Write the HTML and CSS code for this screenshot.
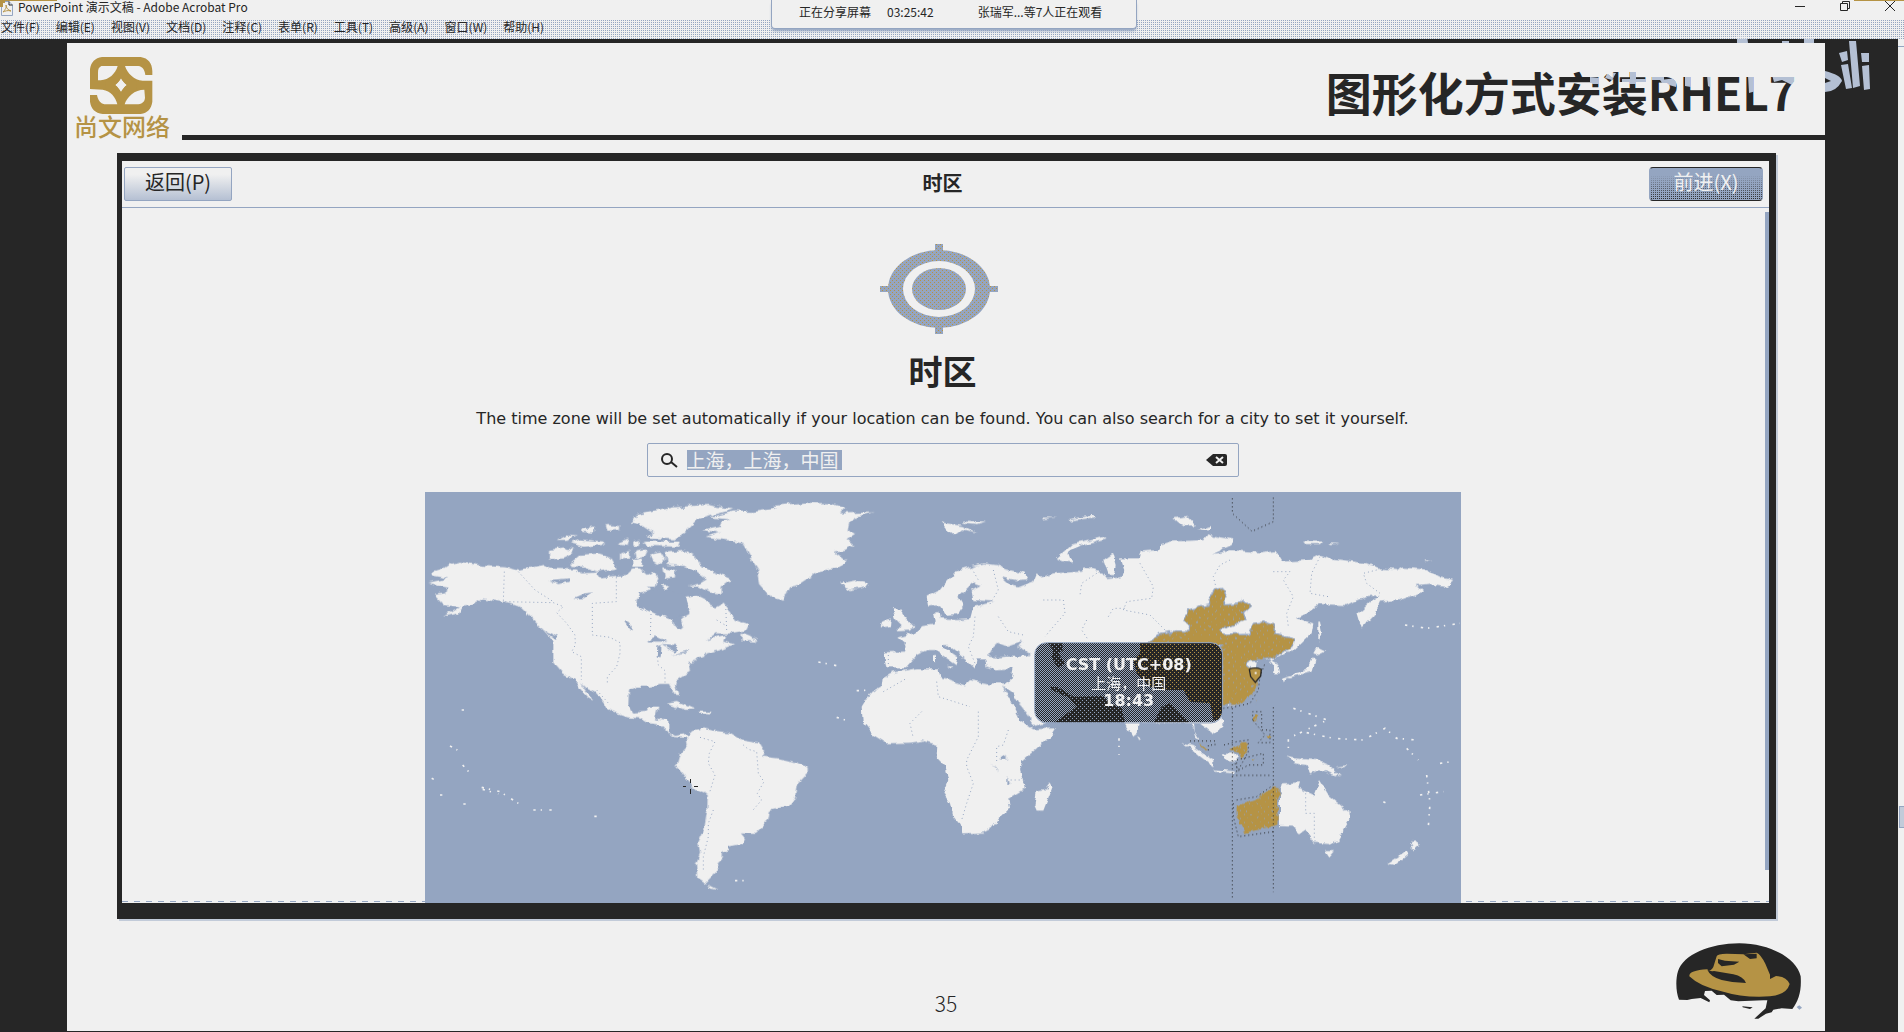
FILE: index.html
```html
<!DOCTYPE html>
<html lang="zh-CN">
<head>
<meta charset="utf-8">
<title>PowerPoint 演示文稿 - Adobe Acrobat Pro</title>
<link rel="stylesheet" href="styles.css">
</head>
<body>
<header class="titlebar">
  <svg class="app-icon" viewBox="0 0 14 16" aria-hidden="true"><path d="M1.500 1.500H9L12.500 5V15.500H1.500Z" fill="#f0f0f0" stroke="#94a5c1"/><path d="M9 1.500V5H12.500" fill="none" stroke="#262626"/><path d="M0 0H5V3H3V7H0Z" fill="#b59345"/><path d="M3 12C5 10 7 7 6 5C6 8 8 10 11 11C8 10 5 11 3 12Z" fill="none" stroke="#b59345"/></svg>
  <h1 class="app-title">PowerPoint 演示文稿 - Adobe Acrobat Pro</h1>
  <div class="window-buttons">
    <button aria-label="最小化"><svg viewBox="0 0 12 12"><path d="M1 6.500H11"/></svg></button>
    <button aria-label="还原"><svg viewBox="0 0 12 12"><path d="M1.500 3.500H8.500V10.500H1.500ZM3.500 3.500V1.500H10.500V8.500H8.500"/></svg></button>
    <button aria-label="关闭"><svg viewBox="0 0 12 12"><path d="M1 1L11 11M11 1L1 11"/></svg></button>
  </div>
</header>
<nav class="menubar">
  <button>文件(F)</button><button>编辑(E)</button><button>视图(V)</button><button>文档(D)</button><button>注释(C)</button><button>表单(R)</button><button>工具(T)</button><button>高级(A)</button><button>窗口(W)</button><button>帮助(H)</button>
</nav>
<div class="share-banner"><span>正在分享屏幕</span><span>03:25:42</span><span class="viewers">张瑞军...等7人正在观看</span></div>

<div class="viewer">
<main class="slide">
  <header class="slide-head">
    <div class="brand">
      <svg viewBox="0 0 189 171" aria-hidden="true">
        <path fill="#b59345" fill-rule="evenodd" d="M36 0H152C175 4 186 18 187 42V54H166C164 38 158 29 145 27H105C112 48 132 70 158 71H187V134C184 155 173 168 152 171H38C15 168 3 155 0 134V114H21C24 130 31 139 43 142H82C77 121 62 101 38 98L0 96V36C3 15 15 3 36 0ZM34 27C26 31 24 37 24 48V70H32C57 68 76 51 83 27ZM93 63C89 71 83 78 75 84C83 90 89 98 93 106C97 98 103 90 111 84C103 78 97 71 93 63ZM163 98C134 98 111 119 104 142H145C159 139 164 133 165 122Z"/>
        <path fill="#b59345" fill-rule="evenodd" d="M93 25C99 48 114 68 139 72L141 98C116 103 100 120 93 144C86 122 72 104 46 98V71C73 63 87 46 93 25ZM93 63C89 71 83 78 75 84C83 90 89 98 93 106C97 98 103 90 111 84C103 78 97 71 93 63Z"/>
      </svg>
      <span>尚文网络</span>
    </div>
    <h2 class="slide-title">图形化方式安装RHEL7</h2>
  </header>

  <section class="shot">
    <header class="shot-head">
      <button class="btn back">返回(P)</button>
      <h3>时区</h3>
      <button class="btn next">前进(X)</button>
    </header>
    <div class="shot-body">
      <svg class="target" viewBox="0 0 118 90" aria-hidden="true">
        <defs><pattern id="speck" width="4" height="4" patternUnits="userSpaceOnUse"><rect width="4" height="4" fill="#94a5c1"/><rect width="1" height="1" fill="#b59345"/><rect x="2" y="2" width="1" height="1" fill="#b59345"/></pattern></defs>
        <path fill="url(#speck)" fill-rule="evenodd" d="M55 0H63V90H55ZM0 42H118V48H0Z"/>
        <ellipse cx="59" cy="45" rx="51" ry="39" fill="url(#speck)"/>
        <ellipse cx="59" cy="45" rx="36" ry="28" fill="#f0f0f0"/>
        <ellipse cx="59" cy="45" rx="27" ry="21" fill="url(#speck)"/>
      </svg>
      <h3 class="zone-title">时区</h3>
      <p class="zone-hint">The time zone will be set automatically if your location can be found. You can also search for a city to set it yourself.</p>
      <label class="search">
        <svg class="lens" viewBox="0 0 18 16" aria-hidden="true"><ellipse cx="7" cy="7" rx="5" ry="5" fill="none" stroke="#262626" stroke-width="2"/><path d="M11 10L17 15" stroke="#262626" stroke-width="2"/></svg>
        <input type="text" value="上海，上海，中国" aria-label="城市">
        <button class="clear" aria-label="清除"><svg viewBox="0 0 22 14"><path d="M0 7L7 1H19Q21 1 21 3V11Q21 13 19 13H7Z" fill="#262626"/><path d="M10 4L17 10M17 4L10 10" stroke="#f0f0f0" stroke-width="2"/></svg></button>
      </label>
      <div class="map">
        <svg viewBox="15 6 3108 1233" role="img" aria-label="世界时区地图">
          <defs>
            <filter id="coast" x="0" y="0" width="100%" height="100%"><feTurbulence type="fractalNoise" baseFrequency="0.04" numOctaves="3" seed="4"/><feDisplacementMap in="SourceGraphic" scale="18" xChannelSelector="R" yChannelSelector="G"/></filter>
            <pattern id="check" width="6" height="6" patternUnits="userSpaceOnUse"><rect width="6" height="6" fill="#262626"/><path d="M0 0H3V3H0ZM3 3H6V6H3Z" fill="#94a5c1"/></pattern>
            <pattern id="goldDots" width="24" height="24" patternUnits="userSpaceOnUse"><rect width="24" height="24" fill="#b59345"/><path d="M0 0H3V3H0ZM12 12H15V15H12Z" fill="#94a5c1"/></pattern>
            <pattern id="nightGold" width="12" height="12" patternUnits="userSpaceOnUse"><rect width="12" height="12" fill="#262626"/><path d="M0 0H3V3H0ZM6 6H9V9H6Z" fill="#b59345"/></pattern>
            <pattern id="nightSea" width="12" height="12" patternUnits="userSpaceOnUse"><rect width="12" height="12" fill="#262626"/><path d="M0 0H3V3H0ZM6 6H9V9H6Z" fill="#94a5c1"/></pattern>
            <clipPath id="bubble"><rect x="1845" y="459" width="561" height="238" rx="34"/></clipPath>
          </defs>
          <rect x="15" y="6" width="3108" height="1233" fill="#94a5c1"/>
          <g filter="url(#coast)" fill="#f0f0f0">
            <!-- the Americas and Greenland -->
            <path d="M38 245L70 235 90 222 120 215 190 228 260 232 300 242 370 228 390 236 470 238 480 250 530 248 540 262 620 255 640 235 660 235 680 255 700 245 712 260 705 290 680 290 690 300 650 328 650 345 690 362 725 378 755 385 758 405 780 418 792 405 785 385 808 372 808 358 795 350 800 320 830 315 860 330 870 348 890 352 910 340 925 360 945 390 985 402 975 422 930 430 890 430 860 452 890 440 915 435 910 455 945 462 900 480 860 490 855 500 830 505 815 525 805 520 810 545 768 572 765 585 776 615 765 615 750 585 720 585 690 590 650 590 627 600 625 645 640 668 680 665 690 650 715 650 705 685 745 690 745 725 765 738 800 732 800 744 760 741 730 715 720 705 680 698 660 685 620 682 580 668 560 655 555 640 525 605 495 590 480 575 495 600 520 632 505 625 480 595 465 570 430 550 400 515 400 455 370 420 340 390 300 350 240 335 190 325 165 340 130 350 115 370 70 380 120 350 70 345 42 315 75 310 80 290 25 278 85 265 40 258Z"/>
            <path d="M390 180L430 172 460 180 450 195 430 205 390 208ZM450 220L480 195 540 190 570 200 590 235 530 245 490 230 455 228ZM410 150L440 133 470 136 440 150ZM450 160L480 148 555 155 545 165 490 170ZM560 105L600 108 600 120 565 122ZM590 160L625 145 620 165ZM600 190L630 180 630 205 600 208ZM640 210L665 205 670 230 640 230ZM640 155L660 150 660 168 640 168ZM670 155L780 155 775 170 690 168ZM635 98L650 75 700 65 760 52 860 45 940 58 880 75 830 90 790 130 760 148 680 142 700 125 670 105ZM645 185L680 178 670 200 650 205ZM690 190L720 185 735 210 715 225 700 215ZM735 185L790 180 820 195 840 225 880 245 935 268 905 290 905 310 870 308 835 290 800 290 840 280 860 268 830 245 790 228 740 225ZM730 235L765 240 765 262 735 265ZM720 285L750 285 740 300ZM965 430L990 440 1010 455 965 452ZM740 642L770 636 825 658 800 660ZM835 662L875 662 870 670 840 668ZM485 118L525 112 520 128 490 126Z"/>
            <path d="M800 740L820 720 850 715 880 722 930 728 970 752 1020 760 1035 785 1030 800 1075 805 1130 818 1163 832 1163 850 1130 885 1125 925 1110 945 1050 962 1045 990 1005 1032 960 1030 975 1048 965 1062 925 1070 925 1080 905 1085 905 1105 890 1120 895 1140 880 1155 865 1170 855 1180 832 1165 828 1120 840 1090 835 1060 852 1020 862 960 863 915 825 900 808 875 790 850 770 828 780 790 803 765ZM862 1183L893 1200 870 1196Z"/>
            <path d="M845 120L900 108 905 95 930 88 870 82 940 64 1000 66 1070 55 1060 48 1150 38 1230 40 1275 54 1260 70 1358 67 1310 80 1285 95 1280 120 1305 135 1280 150 1300 165 1275 180 1240 185 1280 215 1250 235 1190 248 1140 280 1110 290 1090 333 1050 320 1020 285 1015 240 990 200 965 155 900 148 860 140 900 128Z"/>
            <!-- Europe, Africa and Asia -->
            <g transform="translate(1200 0)">
              <path d="M320 320L360 300 380 275 410 240 450 230 490 220 530 225 560 238 610 250 620 268 590 270 545 262 570 285 595 292 640 275 650 250 665 262 700 250 790 245 790 232 840 242 860 267 905 262 910 235 900 205 960 205 965 185 1015 180 1022 163 1050 155 1150 150 1165 130 1190 140 1240 148 1235 165 1175 192 1230 183 1320 190 1370 183 1390 215 1470 210 1500 195 1530 205 1640 220 1680 235 1730 240 1750 230 1810 235 1860 262 1900 270 1880 288 1835 280 1790 285 1810 305 1740 330 1680 335 1665 370 1625 415 1612 370 1650 335 1680 315 1640 318 1600 335 1580 345 1500 342 1460 370 1430 385 1480 400 1475 430 1420 485 1400 485 1350 515 1365 535 1362 550 1380 550 1375 525 1345 505 1315 505 1300 600 1240 645 1200 650 1208 705 1180 732 1140 700 1122 700 1124 725 1140 752 1130 745 1116 700 960 698 952 725 935 738 910 698 850 640 720 690 638 708 600 655 580 612 550 590 570 575 578 535 530 538 500 530 495 505 470 505 465 535 440 512 385 465 372 465 372 475 415 505 410 525 345 480 320 480 290 495 255 535 200 535 190 487 255 485 260 465 235 443 280 430 310 405 345 400 340 370 355 365 360 388 410 390 450 388 460 350 525 335 460 330 455 300 485 285 460 277 415 320 430 345 410 372 380 375 360 345 325 350Z"/>
              <path d="M188 565L220 548 290 535 355 535 360 560 435 585 450 570 500 580 550 580 555 600 580 650 600 690 640 718 705 715 690 740 610 810 600 840 615 895 565 925 570 955 545 975 515 1015 490 1028 430 1030 425 1010 400 980 390 940 370 910 385 870 375 825 350 800 352 765 310 752 270 758 200 760 160 735 128 695 125 650 150 610 185 590ZM692 878L698 890 670 962 650 962 643 945 650 905 675 900Z"/>
              <path d="M60 280L110 270 145 278 135 292 90 300 70 290ZM215 355L238 355 250 375 280 408 270 422 230 424 245 405 225 385ZM190 395L212 385 210 408 185 412ZM365 98L430 108 470 128 430 118 405 138 380 118ZM430 92L498 95 470 102 430 98ZM710 208L760 160 850 138 860 145 780 165 745 190 755 217 730 215ZM850 210L880 190 890 225 885 255 865 255ZM380 528L400 530 395 536ZM342 495L348 495 348 515 342 515ZM660 83L710 83 665 88ZM745 88L820 76 825 82 750 92Z"/>
            </g>
            <!-- the Pacific side -->
            <g transform="translate(2100 0)">
              <path d="M160 85L200 78 225 105 190 108ZM230 118L270 108 270 118ZM550 155L610 155 600 165 555 165ZM625 160L660 162 630 165ZM595 395L600 395 606 430 595 455ZM580 490L590 472 616 485 595 495ZM575 505L586 515 578 545 510 562 495 560 560 540ZM490 562L500 560 495 575ZM190 758L215 765 280 810 280 832 240 802ZM280 838L345 845 340 850 285 845ZM55 735L68 745 60 750ZM308 790L345 785 358 800 345 815 320 808ZM500 800L520 805 590 810 625 825 660 860 600 838 570 850 560 825 520 820ZM645 830L682 826 675 832Z"/>
              <path d="M480 895L490 880 540 877 535 895 580 915 597 870 625 915 685 965 688 990 655 1050 625 1062 580 1058 555 1020 540 1030 515 1010 480 1008ZM615 1083L645 1083 628 1103ZM878 1050L900 1062 880 1080 870 1070ZM805 1120L860 1085 865 1092 825 1125ZM910 212L938 212 915 216Z"/>
            </g>
          </g>
          <!-- inland water -->
          <g filter="url(#coast)" fill="#94a5c1">
            <path d="M385 270L450 265 450 275 415 282ZM460 325L495 310 520 308 490 325ZM612 395L625 395 637 422 625 412ZM675 455L710 440 740 455ZM712 470L725 465 722 498 710 498ZM725 462L775 465 765 485ZM750 495L810 480 800 488ZM650 345L660 308 720 298 795 312 805 345 800 372 760 382 710 372ZM372 420L412 438 408 450 385 432Z"/>
            <g transform="translate(1200 0)"><path d="M505 500L512 480 535 458 560 468 605 452 592 470 628 490 625 500 560 500 530 502ZM540 800L560 792 560 808 540 808ZM515 820L535 850 525 840ZM562 855L570 885 562 885ZM545 588L565 605 605 650 635 690 630 700 605 690 580 640Z"/></g>
          </g>
          <!-- the UTC+08 zone -->
          <g transform="translate(2100 0)">
            <g filter="url(#coast)" fill="url(#goldDots)" stroke="#94a5c1" stroke-width="4">
              <path d="M75 465L105 445 120 430 170 422 210 425 212 410 192 390 205 360 265 345 270 320 285 295 305 293 318 320 312 345 350 342 365 330 392 350 370 370 378 388 350 400 300 420 310 433 390 430 400 400 430 396 460 405 465 430 525 445 520 465 490 490 440 508 390 510 380 525 412 550 412 590 390 625 350 645 305 648 305 465Z"/>
              <path d="M348 942L410 925 460 890 478 893 474 1006 420 1020 370 1032 365 1010 348 975ZM400 670L414 672 410 700 400 695ZM435 735L455 738 445 750ZM325 782L380 752 385 780 365 812 355 790ZM230 752L260 775 252 782ZM390 805L412 805 400 815ZM404 625L412 630 408 640Z"/>
            </g>
            <path class="zone-edge" d="M337 25V70L396 124 460 95V22M337 655V1225M460 652V1205M337 856H450M310 655L345 650 390 640 415 600 420 560 435 520M398 690V665H425V720H450V758H415L435 735ZM312 765L350 755 385 750V785L355 840 345 820M210 753H285V765H265V790M350 845V810L430 790V825H385ZM340 940V980L355 1040 460 1025M350 930L410 920 460 885"/>
            <path d="M388 538Q404 530 424 538L422 558 406 577 392 560Z" fill="#b59345" stroke="#262626" stroke-width="4"/><path d="M404 546H410V552H404Z" fill="#f0f0f0"/>
          </g>
          <g class="borders">
            <path d="M253 245L250 335 400 338 430 350 410 368 440 400 465 435 466 465 455 485 484 500V570M295 245L345 300 400 335M589 250V335L517 340V435L570 442 600 458V490L590 530 562 560V585M693 372L691 440M712 500L715 525 735 542V582M530 600L570 645M917 345L920 420M890 390L915 405M840 742L885 755 868 790 865 820 885 855 868 910M970 765L985 778 1010 785 1015 850 1032 875 1012 910 1025 930 995 965M880 960L865 1000V1040L850 1100V1140"/>
            <path d="M1405 495V535M1665 380L1660 440 1645 470 1665 520M1390 605L1460 565M1550 575L1555 620 1650 650M1505 665L1470 700 1480 745M1675 665V740L1640 810V830L1660 880 1640 940 1625 990M1765 720L1750 765 1730 770V820M1655 235L1675 270M1720 240L1735 300 1705 350M1735 380L1765 425 1810 435M2030 250L1985 280 1980 315M1870 330H1930L1935 370 1900 410 1875 440M2000 390L1985 420 2005 450M2065 380L2080 355H2115M1760 870H1805"/>
            <path d="M2160 220L2200 290 2195 325 2120 335 2110 360 2190 375 2240 425M2430 210L2400 225 2380 260 2390 300M2560 245H2610L2590 270 2620 320 2600 370 2605 410M2700 200L2675 250 2670 310 2725 320M2870 240L2830 250 2840 280 2880 310M2657 910V970H2683V1050"/>
          </g>
          <!-- small islands -->
          <path class="islets" d="M185 892L240 905 295 940M188 898L235 912M125 660H132M90 768L112 780M35 865L45 870M128 825L155 855M60 915H68M130 942H138M340 960L395 960M523 979H530M1195 516L1255 528M945 1172H972M1310 602L1350 600M1250 682L1275 690M2097 745V795M2620 655L2722 690 2605 745V775M2660 728L2740 745 2830 750 2895 715 2930 745 2990 750M2960 775L2995 810M3060 820L3095 815M3020 855L3030 940 3025 1010M3000 915L3070 905M2890 935L2905 942M2955 405L3020 415 3120 400"/>
          <path d="M811 867V880M811 898V912M789 889H799M822 889H834" stroke="#262626" stroke-width="3" shape-rendering="crispEdges"/>
          <!-- zone bubble -->
          <g clip-path="url(#bubble)">
            <rect x="1840" y="455" width="570" height="246" fill="url(#check)"/>
            <path d="M1880 455H1925L1930 480 1915 490 1935 520 1915 535 1895 505 1900 480ZM1890 590L1915 592 1960 620 2050 618 2070 640 2105 655 2115 700H1900L1970 650 1950 625 1895 600ZM2200 700L2225 650 2250 640 2290 680 2310 700Z" fill="url(#nightSea)"/>
            <path d="M2160 455H2420V690H2380L2370 640 2310 635 2290 600 2240 600 2190 590 2150 550 2140 510 2160 490Z" fill="url(#nightGold)"/>
          </g>
          <rect x="1844" y="458" width="564" height="241" rx="35" fill="none" stroke="#94a5c1" stroke-width="3"/>
        </svg>
        <div class="tip"><strong>CST (UTC+08)</strong><span>上海，中国</span><strong>18:43</strong></div>
      </div>
      <div class="shot-scroll"></div>
    </div>
  </section>

  <footer class="slide-foot">
    <span class="page-no">35</span>
    <svg class="hat" viewBox="228 190 378 231" aria-hidden="true">
      <path fill="#262626" d="M237 360C228 340 226 300 234 275C250 225 330 191 418 191C510 192 590 235 602 290C605 335 596 362 577 388L545 386 520 390 515 398 498 402 475 417 463 417 497 386 502 362 490 362 415 365 392 362 372 345 350 346 335 333 315 334 312 346 330 362 328 368 302 355 275 358 262 361Z"/>
      <path fill="#b59345" d="M268 290Q266 272 322 269Q328 280 340 262L350 230Q352 222 380 222L430 224 470 219Q482 224 496 252L510 285V298L528 289Q560 290 569 313Q560 345 510 350Q430 355 370 336Q300 322 268 290Z"/>
      <path fill="#262626" d="M322 270Q335 276 342 274L400 284Q430 290 438 310Q400 310 365 301Q330 290 322 270ZM354 238L375 243 418 246 402 255 365 260 354 250ZM430 224L470 222 470 236 450 238ZM427 380L442 381 458 383 450 388 428 383Z"/>
      <path fill="#94a5c1" d="M590 382L598 377 606 384 598 390Z"/>
    </svg>
  </footer>
</main>
<aside class="side-scroll"><div class="side-thumb"></div></aside>
</div>
<svg class="watermark" viewBox="1590 35 290 60" aria-hidden="true">
  <g fill="#b4c0d4">
    <path d="M1737 35L1747 35 1748 43H1737ZM1782 41H1789V43H1782ZM1804 38H1814V43H1804Z"/>
    <path d="M1608 72L1616 73 1612 80 1605 78ZM1622 79H1646V84H1622ZM1630 72H1636V84H1630ZM1590 77L1600 78V84H1590ZM1652 76H1664V80H1652ZM1660 80L1677 78 1676 87 1662 83ZM1685 75H1691V87L1685 86ZM1707 75L1714 78 1712 88 1708 86ZM1748 75H1757L1756 91 1749 93ZM1772 75L1796 76 1794 86 1782 80 1774 82Z"/>
    <path fill-rule="evenodd" d="M1825 71Q1841 75 1842 81Q1836 92 1825 92ZM1825 78L1831 81 1825 83Z"/>
    <path d="M1839 53L1847 51 1848 60 1842 62ZM1841 65L1848 64 1852 88 1846 89ZM1849 41H1856L1860 86 1853 88ZM1861 53H1869V62H1862ZM1862 66L1869 65 1870 89 1864 90Z"/>
  </g>
</svg>
</body>
</html>
```
FILE: styles.css
```css
:root {
  --paper: #f0f0f0;
  --ink: #262626;
  --blue: #94a5c1;
  --gold: #b59345;
}

* { box-sizing: border-box; }

body {
  margin: 0;
  min-height: 100vh;
  display: flex;
  flex-direction: column;
  position: relative;
  overflow-x: hidden;
  background: var(--ink);
  color: var(--ink);
  font-family: "Noto Sans CJK SC", sans-serif;
  font-size: 12px;
}

h1, h2, h3, p { margin: 0; }

button {
  margin: 0;
  padding: 0;
  border: 0;
  background: none;
  color: inherit;
  font: inherit;
}

svg { display: block; }

.titlebar {
  height: 20px;
  display: flex;
  align-items: flex-start;
  background:
    linear-gradient(var(--gold), var(--gold)) 0 0 / 57px 1px no-repeat,
    linear-gradient(var(--gold), var(--gold)) 100% 0 / 50px 1px no-repeat,
    var(--paper);
}

.app-icon { width: 14px; height: 16px; }

.app-title {
  flex: 1;
  margin-left: 4px;
  font-size: 12px;
  font-weight: 400;
  line-height: 14px;
}

.window-buttons {
  display: flex;
  gap: 33px;
  padding-right: 8px;
}

.window-buttons svg {
  width: 12px;
  height: 12px;
  fill: none;
  stroke: var(--ink);
}

.menubar {
  height: 19px;
  display: flex;
  align-items: flex-start;
  gap: 16px;
  padding-left: 1px;
  line-height: 14px;
  background:
    conic-gradient(var(--blue) 25%, transparent 0) 0 0 / 2px 2px,
    var(--paper);
}

.share-banner {
  position: absolute;
  top: 0;
  left: 50%;
  width: 366px;
  height: 29px;
  margin-left: -181px;
  padding-left: 27px;
  display: flex;
  gap: 16px;
  line-height: 24px;
  background: var(--paper);
  border: 1px solid var(--blue);
  border-top: 0;
  border-radius: 0 0 4px 4px;
  box-shadow: 0 3px 3px -1px var(--blue);
  white-space: nowrap;
}

.viewers { margin-left: 28px; }

.viewer {
  flex: 1;
  display: flex;
}

.slide {
  flex: 1;
  min-width: 0;
  display: flex;
  flex-direction: column;
  margin: 4px 73px 1px 67px;
  background: var(--paper);
}

.slide-head {
  height: 97px;
  display: flex;
  gap: 11px;
  padding-left: 7px;
}

.brand {
  width: 97px;
  padding-top: 14px;
  color: var(--gold);
  font-size: 24px;
  font-weight: 500;
  line-height: 24px;
}

.brand svg {
  width: 63px;
  height: 57px;
  margin-left: 16px;
}

.slide-title {
  flex: 1;
  padding: 8px 29px 0 0;
  border-bottom: 5px solid var(--ink);
  font-size: 46px;
  font-weight: 700;
  line-height: 80px;
  text-align: right;
}

.shot {
  margin: 13px 49px 0 50px;
  border: solid var(--ink);
  border-width: 8px 7px 16px 5px;
  box-shadow: 2px 2px 0 #c2cbd9;
}

.shot-head {
  height: 47px;
  display: flex;
  align-items: center;
  justify-content: space-between;
  padding: 0 6px 1px 2px;
  border-bottom: 1px solid var(--blue);
}

.shot-head h3 {
  font-size: 20px;
  line-height: 28px;
  padding: 0 0 2px 4px;
}

.btn {
  height: 34px;
  border: 1px solid var(--blue);
  border-radius: 2px;
  font-size: 20px;
  line-height: 28px;
  padding-bottom: 4px;
}

.back {
  width: 108px;
  background: linear-gradient(var(--paper) 20%, #b5c0d3);
}

.next {
  width: 114px;
  border-color: var(--ink) var(--blue);
  border-radius: 4px;
  background:
    linear-gradient(var(--blue) 20%, transparent),
    conic-gradient(var(--ink) 25%, transparent 0) 0 0 / 2px 2px,
    var(--blue);
  color: var(--paper);
}

.shot-body {
  position: relative;
  display: flex;
  flex-direction: column;
  align-items: center;
  padding: 36px 6px 0 0;
}

.target {
  width: 118px;
  height: 90px;
  margin-right: 8px;
}

.zone-title {
  margin-top: 17px;
  font-size: 34px;
  line-height: 40px;
}

.zone-hint {
  margin-top: 18px;
  font-family: "DejaVu Sans", sans-serif;
  font-size: 16px;
  line-height: 20px;
}

.search {
  width: 592px;
  max-width: 100%;
  height: 34px;
  margin-top: 14px;
  padding: 0 10px 0 12px;
  display: flex;
  align-items: center;
  border: 1px solid var(--blue);
  border-radius: 2px;
}

.lens { width: 18px; height: 16px; }

.search input {
  width: 155px;
  height: 20px;
  margin: 0 auto 0 9px;
  padding: 0;
  border: 0;
  background: var(--blue);
  color: var(--paper);
  font-family: inherit;
  font-size: 19px;
  line-height: 20px;
}

.clear svg { width: 22px; height: 14px; }

.map {
  position: relative;
  width: 1036px;
  max-width: 100%;
  margin-top: 15px;
}

.map > svg { width: 100%; }

.borders path {
  fill: none;
  stroke: var(--blue);
  stroke-width: 3;
  stroke-dasharray: 3 9;
}

.zone-edge {
  fill: none;
  stroke: var(--ink);
  stroke-width: 3;
  stroke-dasharray: 3 9;
}

.islets {
  fill: none;
  stroke: var(--paper);
  stroke-width: 5;
  stroke-dasharray: 7 15 4 22;
}

.tip {
  position: absolute;
  left: 59%;
  top: 37%;
  width: 186px;
  height: 80px;
  padding-top: 12px;
  display: flex;
  flex-direction: column;
  align-items: center;
  color: var(--paper);
  font-size: 15px;
  line-height: 18px;
}

.tip strong {
  font-family: "DejaVu Sans", sans-serif;
  font-size: 16px;
}

.shot-body::after {
  content: "";
  position: absolute;
  inset: auto 0 1px 0;
  height: 1px;
  background: repeating-linear-gradient(90deg, var(--blue) 0 6px, transparent 6px 12px);
}

.shot-scroll {
  position: absolute;
  top: 4px;
  right: 0;
  bottom: 33px;
  width: 4px;
  background: var(--blue);
}

.slide-foot {
  flex: 1;
  min-height: 112px;
  display: grid;
  grid-template-columns: 1fr auto 1fr;
  padding: 24px 23px 11px;
}

.page-no {
  grid-column: 2;
  align-self: end;
  font-size: 21px;
  font-weight: 300;
  line-height: 34px;
}

.hat {
  width: 126px;
  height: 77px;
  justify-self: end;
}

.side-scroll {
  width: 6px;
  padding: 767px 0 0 1px;
  background: linear-gradient(var(--blue), var(--blue)) 0 7px / 6px 1px no-repeat, var(--paper);
}

.side-thumb {
  height: 22px;
  border: 1px solid var(--blue);
  border-right: 0;
  background: #c2cbd9;
}

.watermark {
  position: absolute;
  top: 35px;
  right: 24px;
  width: 290px;
  height: 60px;
  mix-blend-mode: lighten;
  pointer-events: none;
}
```
